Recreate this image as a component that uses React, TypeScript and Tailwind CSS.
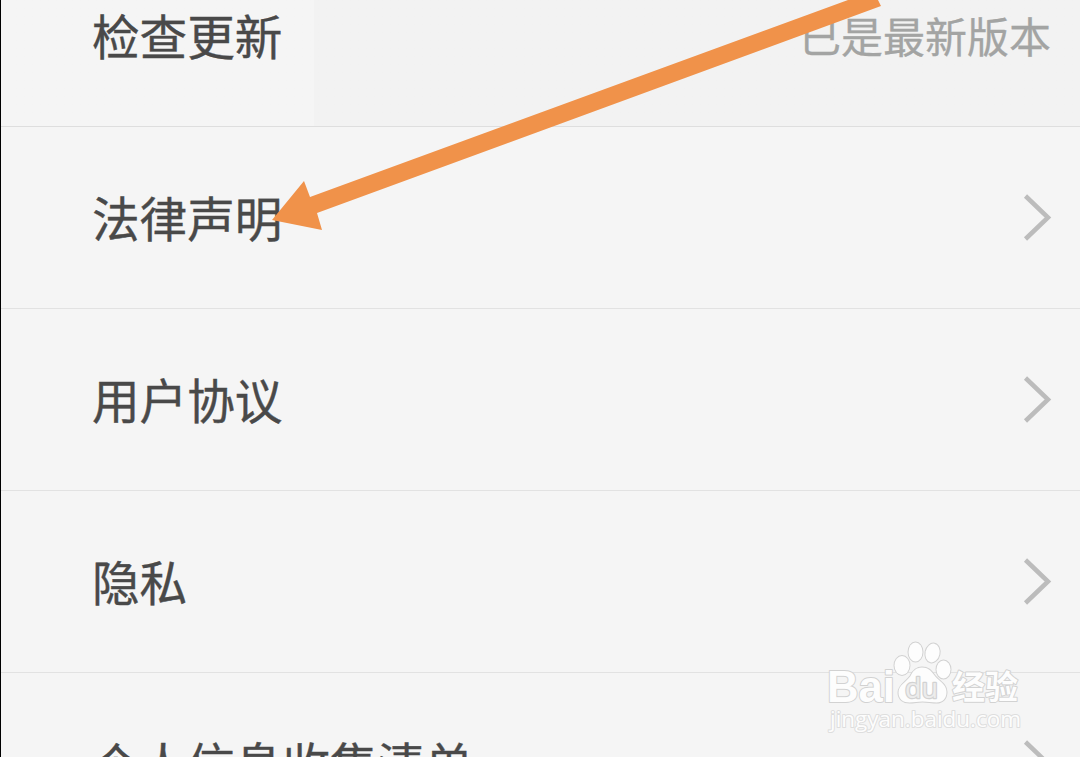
type TRow = {
	title: string;
	value?: string;
};

const rows: TRow[] = [
	{ title: '检查更新', value: '已是最新版本' },
	{ title: '法律声明' },
	{ title: '用户协议' },
	{ title: '隐私' },
	{ title: '个人信息收集清单' },
];

const Chevron = () => (
	<svg
		className="mb-0.5 h-12 w-8"
		viewBox="0 0 32 48"
		fill="none"
		stroke="#bcbcbc"
		strokeWidth="4.5"
	>
		<path d="M4.5 3 27 24.5 4.5 46" />
	</svg>
);

const Row = ({ title, value }: TRow) => (
	<li
		className={`flex h-[182px] shrink-0 items-center justify-between border-b pl-[91px] ${
			value
				? 'border-[#dedede] bg-linear-to-r from-[#f5f5f5] from-29% to-[#f2f2f2] to-29% pr-[29px]'
				: 'border-[#e2e2e2] pr-[27px]'
		}`}
	>
		<span className="pb-[2px] text-[47.6px] leading-none text-[#494949] [-webkit-text-stroke:0.4px_#494949]">
			{title}
		</span>
		{value ? (
			<span className="pb-px text-[42px] leading-none text-[#a3a4a3] [-webkit-text-stroke:0.3px_#a3a4a3]">
				{value}
			</span>
		) : (
			<Chevron />
		)}
	</li>
);

const Arrow = () => (
	<svg className="absolute left-0 top-0" width="1080" height="240" viewBox="0 0 1080 240">
		<path d="M272 220 304 181 310 197 848 0H878L881 6 317 213 322 230Z" fill="#f0924a" />
	</svg>
);

const Watermark = () => (
	<svg
		className="absolute left-[820px] top-[636px]"
		width="210"
		height="104"
		viewBox="0 0 210 104"
		fill="#fdfdfd"
		stroke="#d2d2d2"
		strokeWidth="2"
		paintOrder="stroke"
		strokeLinejoin="round"
	>
		<text
			className="font-['Liberation_Sans',sans-serif] text-[44px] font-bold"
			x="7"
			y="66"
			textLength="68"
			lengthAdjust="spacingAndGlyphs"
		>
			Bai
		</text>
		<ellipse cx="82" cy="29.5" rx="7.5" ry="9.5" />
		<ellipse cx="95.5" cy="16" rx="7" ry="9.5" />
		<ellipse cx="112.5" cy="17" rx="7" ry="9.5" transform="rotate(12 112.5 17)" />
		<ellipse cx="123.5" cy="33.5" rx="7" ry="9" />
		<path d="M102 31.5c-6 0-9 3.500-11.500 8.500-4 6-12 9-12 16.500 0 7 5 10 11 10 5 0 8-1 13-1s9 1 14 1c6 0 10-4 10-10.500 0-8-8-11-12-16.500-3.500-5-6.500-8-12.500-8Z" />
		<text
			className="font-['Open_Sans',sans-serif] text-[27px]"
			x="85"
			y="62"
			textLength="33"
			lengthAdjust="spacingAndGlyphs"
			fill="#ececec"
			strokeWidth="2.5"
		>
			du
		</text>
		<text
			className="font-['Noto_Sans_CJK_SC',sans-serif] text-[33px] font-bold"
			x="132"
			y="63"
			textLength="66"
			lengthAdjust="spacingAndGlyphs"
		>
			经验
		</text>
		<text
			className="font-['Open_Sans',sans-serif] text-[22px]"
			x="10"
			y="91"
			textLength="191"
			lengthAdjust="spacingAndGlyphs"
			stroke="#dedede"
		>
			jingyan.baidu.com
		</text>
	</svg>
);

const App = () => (
	<main className="relative h-[757px] w-[1080px] overflow-hidden border-l border-black bg-[#f5f5f5] font-['Noto_Sans_CJK_SC',sans-serif]">
		{/* the list is scrolled, so the first and last rows are cut off */}
		<ul className="-mt-[55px] flex flex-col">
			{rows.map((row) => (
				<Row key={row.title} {...row} />
			))}
		</ul>
		<div className="absolute -left-px top-0">
			<Arrow />
			<Watermark />
		</div>
	</main>
);

export default App;
